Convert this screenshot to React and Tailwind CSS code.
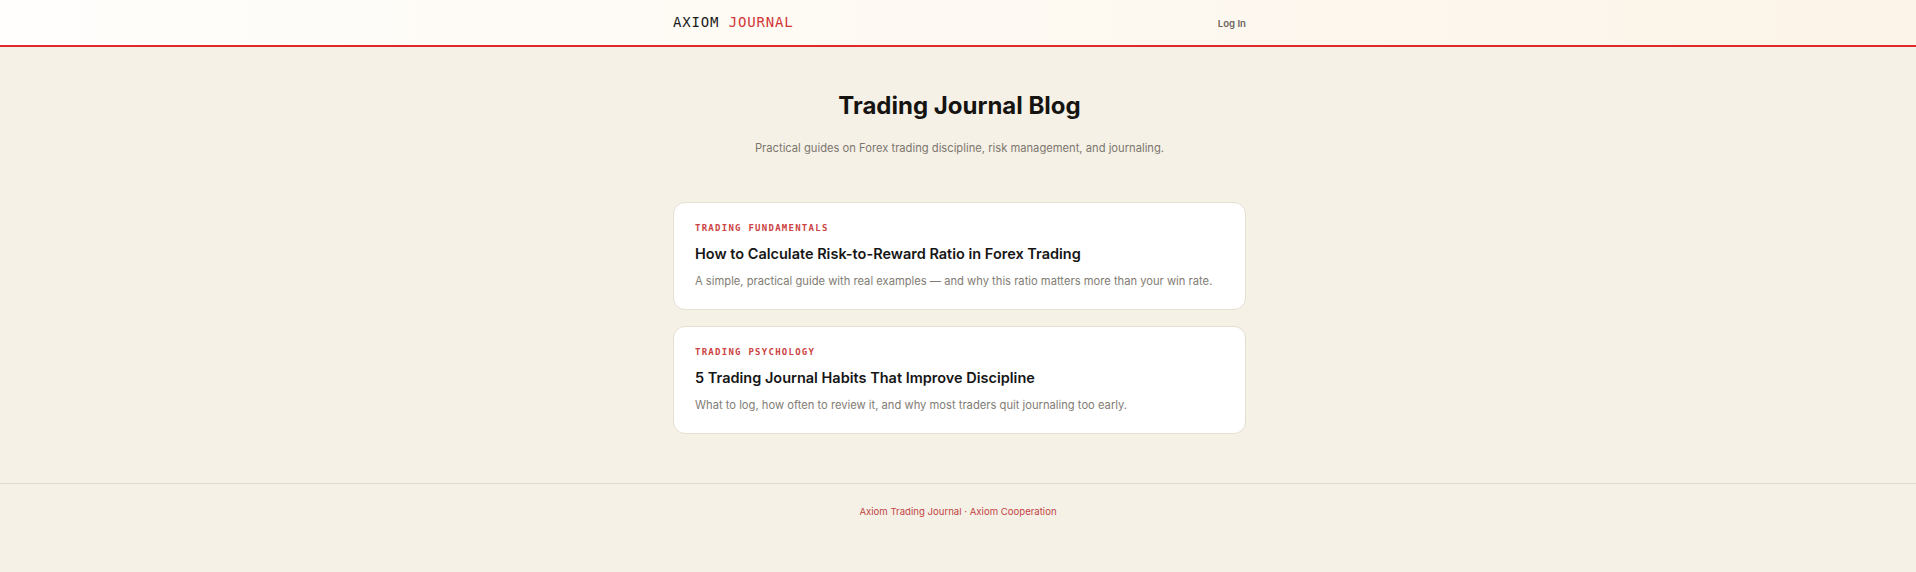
import React from 'react';

const posts = [
  {
    category: 'Trading Fundamentals',
    title: 'How to Calculate Risk-to-Reward Ratio in Forex Trading',
    excerpt: 'A simple, practical guide with real examples — and why this ratio matters more than your win rate.',
  },
  {
    category: 'Trading Psychology',
    title: '5 Trading Journal Habits That Improve Discipline',
    excerpt: 'What to log, how often to review it, and why most traders quit journaling too early.',
  },
];

const PostCard = ({ category, title, excerpt }) => (
  <a
    href="#"
    className="block h-[108px] bg-white border border-[#e6dfd0] rounded-xl px-[21px] pt-[19px] pb-[17px]"
  >
    <div className="text-[9px] leading-[12px] font-semibold uppercase tracking-[0.14em] text-[#cc4343] font-['DejaVu_Sans_Mono',monospace]">
      {category}
    </div>
    <h2 className="mt-2 text-[14.5px] leading-6 font-semibold text-[#161616]">{title}</h2>
    <p className="mt-[5px] text-[11.2px] leading-5 text-[#827c74]">{excerpt}</p>
  </a>
);

export default function App() {
  return (
    <div className="min-h-[572px] bg-[#f5f1e7] font-['Inter',sans-serif]">
      {/* Header */}
      <header className="h-[47px] bg-gradient-to-r from-[#fffefc] to-[#fcf4e8] border-b-2 border-[#de2a2a]">
        <div className="max-w-xl mx-auto h-full flex items-center justify-between pl-[3px]">
          <div className="text-[14px] tracking-[0.06em] font-['DejaVu_Sans_Mono',monospace] font-medium">
            <span className="text-[#1b1b1b]">AXIOM</span>{' '}
            <span className="text-[#d33535]">JOURNAL</span>
          </div>
          <a href="#" className="pt-[3px] text-[9.6px] font-semibold text-[#6a6560]">
            Log In
          </a>
        </div>
      </header>

      {/* Main */}
      <main className="max-w-xl mx-auto pt-[43px] pb-[49px] pl-[3px]">
        <h1 className="text-center text-2xl leading-8 font-bold text-[#161410]">Trading Journal Blog</h1>
        <p className="mt-4 text-center text-[11.2px] leading-5 text-[#7c766e]">
          Practical guides on Forex trading discipline, risk management, and journaling.
        </p>

        <div className="mt-11 flex flex-col gap-4">
          {posts.map((post) => (
            <PostCard key={post.title} {...post} />
          ))}
        </div>
      </main>

      {/* Footer */}
      <footer className="border-t border-[#e2dccf] pt-[20px] pb-[52px] text-center">
        <p className="text-[9.6px] leading-4 text-[#c24444]">
          Axiom Trading Journal · Axiom Cooperation
        </p>
      </footer>
    </div>
  );
}
